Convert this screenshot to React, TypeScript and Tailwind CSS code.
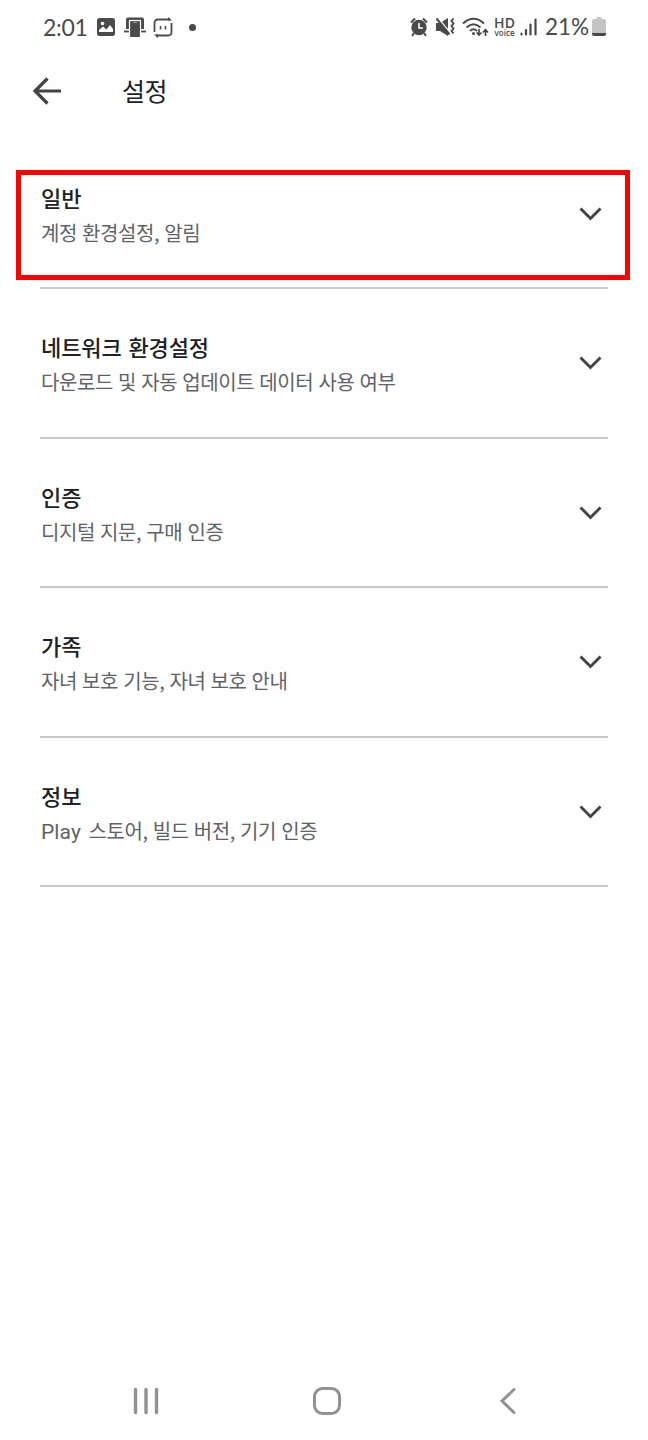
import type { ReactNode } from "react";

type Section = {
  title: string;
  description: ReactNode;
  highlighted?: boolean;
};

const sections: Section[] = [
  { title: "일반", description: "계정 환경설정, 알림", highlighted: true },
  { title: "네트워크 환경설정", description: "다운로드 및 자동 업데이트 데이터 사용 여부" },
  { title: "인증", description: "디지털 지문, 구매 인증" },
  { title: "가족", description: "자녀 보호 기능, 자녀 보호 안내" },
  {
    title: "정보",
    description: (
      <>
        <span className="mr-[2.5px] font-['Roboto'] text-[21px] tracking-[0.1px]">Play</span> 스토어, 빌드 버전, 기기 인증
      </>
    ),
  },
];

type IconProps = {
  width: number;
  height: number;
  className?: string;
  children: ReactNode;
};

function Icon({ width, height, className = "", children }: IconProps) {
  return (
    <svg
      width={width}
      height={height}
      viewBox={`0 0 ${width} ${height}`}
      fill="none"
      stroke="currentColor"
      className={`shrink-0 ${className}`}
    >
      {children}
    </svg>
  );
}

function StatusBar() {
  return (
    <div className="flex h-[54px] items-center pl-[43px] pr-[42px] text-[#4a4a4a]">
      <span className="w-[54px] shrink-0 font-['Lato','Open_Sans',sans-serif] text-[23px] leading-none tracking-[-0.3px]">
        2:01
      </span>

      {/* gallery */}
      <Icon width={18} height={18}>
        <rect x="0" y="0" width="18" height="18" rx="2.5" fill="currentColor" stroke="none" />
        <circle cx="5.5" cy="5.5" r="1.8" fill="#fff" stroke="none" />
        <path d="M2 14v-2l4-3.5 3.5 3L13 7l3 4v3Z" fill="#fff" stroke="none" />
      </Icon>

      {/* phone in dock */}
      <Icon width={22} height={20} className="ml-[9px]">
        <path d="M2 12V2.500q0-2 2-2h14q2 0 2 2V12Z" fill="currentColor" stroke="none" />
        <path d="M0 14.500h22" strokeWidth="1.800" />
        <rect x="5.500" y="3.500" width="11" height="18" fill="currentColor" stroke="#fff" strokeWidth="1.200" />
        <path d="M9 5.500h4" stroke="#999" strokeWidth="1" />
      </Icon>

      {/* rotating chat */}
      <Icon width={20} height={21} className="ml-[7px]">
        <path d="M1.500 15V6q0-3.500 3.500-3.500h12M18.500 6v9q0 3.500-3.500 3.500H3" strokeWidth="1.800" />
        <path d="m15 0 4 3.500h-4ZM5 21l-4-3.500h4Z" fill="currentColor" stroke="none" />
        <path d="M7.500 9v3.500M12.500 9v3.500" strokeWidth="1.600" />
      </Icon>

      <span className="ml-4 size-[7px] rounded-full bg-[#4a4a4a]" />

      <div className="ml-auto flex items-center">
        {/* alarm */}
        <Icon width={18} height={20}>
          <path d="m1 5.500 4-4M17 5.500l-4-4M4 16l-2 3M14 16l2 3" strokeWidth="2" />
          <circle cx="9" cy="10.500" r="7.700" fill="currentColor" stroke="none" />
          <path d="M9 6v5h4" stroke="#fff" strokeWidth="1.600" />
        </Icon>

        {/* vibrate, muted */}
        <Icon width={19} height={20} className="ml-[8px]">
          <path d="M0 6h4l8-5v18l-8-5H0Z" fill="currentColor" stroke="none" />
          <path d="m2 1 12 14.500" stroke="#fff" strokeWidth="1.500" />
          <path d="m0.500 1.500 13 16" strokeWidth="2" />
          <path d="m17.500 1.500-2 2.500 2 2.500-2 2.500 2 2.500-2 2.500 2 2.500" strokeWidth="1.900" />
        </Icon>

        {/* wifi with traffic arrows */}
        <Icon width={27} height={20} className="ml-[7px]">
          <path d="M1 6.500q10.500-9.500 21 0M4.500 10.500q7-6.500 14 0M8 14q3.500-3.500 7 0" strokeWidth="2" />
          <circle cx="11.500" cy="16.500" r="1.500" fill="currentColor" stroke="none" />
          <path
            d="M17 12v6m-2.500-2.500 2.500 2.500 2.500-2.500M23.500 19v-6.500m-2.500 3 2.500-3 2.500 3"
            strokeWidth="1.700"
          />
        </Icon>

        <div className="ml-[5px] flex w-[21px] flex-col items-center font-['Open_Sans',sans-serif] font-semibold">
          <span className="text-[14px] leading-[12px]">HD</span>
          <span className="text-[8px] leading-[8px]">voice</span>
        </div>

        {/* signal */}
        <Icon width={17} height={18} className="ml-[5px]">
          <path d="M1.500 15.500v1M6 12v4.500M10.500 6.500v10M15.500 1.500v15" strokeWidth="2.200" strokeLinecap="round" />
        </Icon>

        <span className="ml-2 w-[47px] whitespace-nowrap font-['Lato','Open_Sans',sans-serif] text-[22.500px] leading-none">
          21%
        </span>

        {/* battery */}
        <Icon width={14} height={20}>
          <path d="M4.500 0h5v2H12q2 0 2 2v13q0 2-2 2H2q-2 0-2-2V4q0-2 2-2h2.500Z" fill="#c4c4c4" stroke="none" />
          <path d="M0 16h14v1q0 2-2 2H2q-2 0-2-2Z" fill="currentColor" stroke="none" />
        </Icon>
      </div>
    </div>
  );
}

function SectionRow({ title, description, highlighted }: Section) {
  return (
    <section className="relative mx-10 flex h-[149.400px] justify-between border-b-2 border-[#c8c8c8]">
      {highlighted && (
        <div className="absolute -left-6 -right-[22px] top-[30px] h-[110px] border-[5px] border-[#ff0000]" />
      )}
      <div className="pl-px pt-[41px]">
        <h2 className="text-[22px] font-medium leading-8 tracking-[-0.100px] text-[#202124] [word-spacing:2px]">
          {title}
        </h2>
        <p className="mt-1 text-[20px] leading-8 tracking-[-0.400px] text-[#5f6368] [word-spacing:1px]">
          {description}
        </p>
      </div>
      <Icon width={24} height={14} className="mr-[5px] mt-[67px] text-[#444]">
        <path d="m1.500 1.500 10 10 10-10" strokeWidth="2.900" />
      </Icon>
    </section>
  );
}

export default function App() {
  return (
    <div className="flex h-[1440px] w-[648px] flex-col bg-[#fefefe] font-['Noto_Sans_CJK_KR',sans-serif]">
      <StatusBar />

      <header className="flex h-[86px] items-start pl-8 pt-[18px]">
        <Icon width={30} height={28} className="mt-[5px] text-[#444]">
          <path d="M29 14H3M15.500 1.500 3 14l12.500 12.500" strokeWidth="3.200" />
        </Icon>
        <h1 className="ml-[60px] text-[25px] leading-9 tracking-[-0.500px] text-[#202124]">설정</h1>
      </header>

      <main>
        {sections.map((section) => (
          <SectionRow key={section.title} {...section} />
        ))}
      </main>

      <nav className="mt-auto flex h-[78px] items-center pl-[133px] text-[#929292]">
        <Icon width={26} height={28}>
          <path d="M2.500 2.500v23M13 2.500v23M23.500 2.500v23" strokeWidth="3.400" strokeLinecap="round" />
        </Icon>
        <Icon width={28} height={28} className="ml-[154px]">
          <rect x="1.500" y="1.500" width="25" height="25" rx="8" strokeWidth="3" />
        </Icon>
        <Icon width={17} height={28} className="ml-[158px]">
          <path d="M15 2.500 3 14l12 11.500" strokeWidth="3" strokeLinecap="round" />
        </Icon>
      </nav>
    </div>
  );
}
